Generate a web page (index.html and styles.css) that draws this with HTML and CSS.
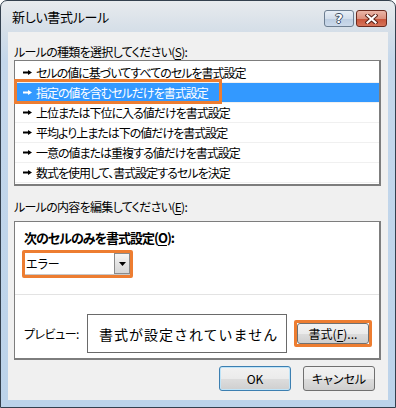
FILE: index.html
```html
<!DOCTYPE html>
<html lang="ja">
<head>
  <meta charset="UTF-8">
  <title>新しい書式ルール</title>
  <link rel="stylesheet" href="styles.css">
</head>
<body>
  <div class="window">
    <div class="titlebar">
      <span class="title">新しい書式ルール</span>
      <div class="caption-buttons">
        <button class="cap cap-help">?</button>
        <button class="cap cap-close">
          <svg width="13" height="10" viewBox="0 0 13 10">
            <path d="M2.5 1.5L10.5 8.5M10.5 1.5L2.5 8.5" stroke="#5b2218" stroke-width="4.2" stroke-linecap="square"/>
            <path d="M2.5 1.5L10.5 8.5M10.5 1.5L2.5 8.5" stroke="#fff" stroke-width="2.2" stroke-linecap="square"/>
          </svg>
        </button>
      </div>
    </div>

    <div class="dialog">
      <div class="label">ルールの種類を選択してください(<u>S</u>):</div>
      <div class="rule-list">
        <div class="rule"><svg class="arrow" viewBox="0 0 9 5"><path d="M0 1.5h5V0l4 2.5-4 2.5V3.5H0z"/></svg>セルの値に基づいてすべてのセルを書式設定</div>
        <div class="rule selected"><svg class="arrow" viewBox="0 0 9 5"><path d="M0 1.5h5V0l4 2.5-4 2.5V3.5H0z"/></svg>指定の値を含むセルだけを書式設定</div>
        <div class="rule"><svg class="arrow" viewBox="0 0 9 5"><path d="M0 1.5h5V0l4 2.5-4 2.5V3.5H0z"/></svg>上位または下位に入る値だけを書式設定</div>
        <div class="rule"><svg class="arrow" viewBox="0 0 9 5"><path d="M0 1.5h5V0l4 2.5-4 2.5V3.5H0z"/></svg>平均より上または下の値だけを書式設定</div>
        <div class="rule"><svg class="arrow" viewBox="0 0 9 5"><path d="M0 1.5h5V0l4 2.5-4 2.5V3.5H0z"/></svg>一意の値または重複する値だけを書式設定</div>
        <div class="rule"><svg class="arrow" viewBox="0 0 9 5"><path d="M0 1.5h5V0l4 2.5-4 2.5V3.5H0z"/></svg>数式を使用して、書式設定するセルを決定</div>
        <div class="highlight"></div>
      </div>

      <div class="label label-edit">ルールの内容を編集してください(<u>E</u>):</div>
      <div class="panel">
        <div class="panel-head">次のセルのみを書式設定(<u>O</u>):</div>
        <div class="combo-frame">
          <div class="combo">
            <span class="combo-value">エラー</span>
            <span class="combo-btn">
              <svg width="7" height="4" viewBox="0 0 7 4"><path d="M0 0h7L3.5 4z"/></svg>
            </span>
          </div>
        </div>
        <div class="separator"></div>
        <div class="preview-row">
          <span class="preview-label">プレビュー:</span>
          <div class="preview-box">書式が設定されていません</div>
          <div class="format-frame">
            <button class="btn btn-format">書式(<u>F</u>)...</button>
          </div>
        </div>
      </div>

      <div class="actions">
        <button class="btn btn-default">OK</button>
        <button class="btn">キャンセル</button>
      </div>
    </div>
  </div>
</body>
</html>
```

FILE: styles.css
```css
body {
  margin: 0;
  background: #fff;
  font-family: "Noto Sans CJK JP", "Liberation Sans", sans-serif;
  color: #000;
}

.window {
  width: 396px;
  height: 408px;
  box-sizing: border-box;
  border: 1px solid #34404e;
  border-radius: 7px 7px 0 0;
  background: linear-gradient(#e8ebee, #d6dfe8 28px, #c4d7eb 60px, #bcd3ea);
  display: flex;
  flex-direction: column;
}

/* title bar */
.titlebar {
  height: 31px;
  flex-shrink: 0;
  display: flex;
  justify-content: space-between;
  align-items: flex-start;
  padding: 0 8px 0 11px;
}

.title {
  font-size: 13px;
  line-height: 31px;
  font-feature-settings: "palt";
  letter-spacing: -0.3px;
}

.caption-buttons {
  display: flex;
  gap: 2px;
  margin-top: 9px;
}

.cap {
  width: 30px;
  height: 17px;
  padding: 0;
  box-sizing: border-box;
  border: 1px solid #6d7e91;
  border-radius: 3px;
  display: flex;
  align-items: center;
  justify-content: center;
}

.cap-help {
  background: linear-gradient(#e8eff7, #d3deeb 50%, #bccde1 51%, #cbd9ea);
  color: #fff;
  font: bold 13px "DejaVu Sans", sans-serif;
  text-shadow: 1px 0 #3d4e62, -1px 0 #3d4e62, 0 1px #3d4e62, 0 -1px #3d4e62;
}

.cap-close {
  width: 31px;
  border-color: #6b2a1e;
  background: linear-gradient(#ebb6a8, #dc917e 50%, #c85339 51%, #d6745a);
}

/* dialog body */
.dialog {
  flex: 1;
  margin: 0 7px 7px;
  padding: 0 7px 9px 6px;
  background: #f0f0f0;
  display: flex;
  flex-direction: column;
  font-size: 12px;
  font-feature-settings: "palt";
}

.label {
  margin-top: 12px;
  line-height: 16px;
  white-space: nowrap;
  letter-spacing: -0.7px;
}

.label-edit {
  margin-top: 13px;
}

u {
  text-underline-offset: 2px;
}

.rule-list {
  position: relative;
  height: 126px;
  box-sizing: border-box;
  padding-top: 2px;
  background: #fff;
  border: 1px solid #7d7d7d;
  border-right-width: 2px;
  border-bottom-width: 2px;
}

.rule {
  height: 19px;
  border-bottom: 1px solid #f0f0f0;
  display: flex;
  align-items: center;
  padding-left: 8px;
  white-space: nowrap;
  letter-spacing: -1px;
}

.rule.selected {
  background: #3399ff;
  color: #fff;
}

.arrow {
  width: 9px;
  height: 5px;
  margin-right: 4px;
  fill: currentColor;
  flex-shrink: 0;
}

.highlight {
  position: absolute;
  left: -1px;
  top: 18px;
  width: 208px;
  height: 25px;
  box-sizing: border-box;
  border: 3px solid #ed7d31;
}

/* rule description panel */
.panel {
  margin-top: 6px;
  height: 139px;
  box-sizing: border-box;
  background: #fff;
  border: 1px solid #7d7d7d;
  border-right-width: 2px;
  border-bottom-width: 2px;
}

.panel-head {
  padding: 7px 0 0 9px;
  font-size: 13px;
  font-weight: bold;
  line-height: 18px;
  letter-spacing: -1px;
}

.combo-frame {
  margin: 3px 0 0 7px;
  width: 111px;
  height: 28px;
  box-sizing: border-box;
  border: 3px solid #ed7d31;
  border-radius: 2px;
  display: flex;
}

.combo {
  flex: 1;
  display: flex;
  align-items: flex-start;
  background: #fff;
  border-bottom: 1px solid #c8c8c8;
}

.combo-value {
  padding-left: 1px;
  line-height: 21px;
}

.combo-btn {
  margin-left: auto;
  width: 16px;
  height: 21px;
  box-sizing: border-box;
  border: 1px solid #8a8a8a;
  background: linear-gradient(#f5f5f5, #e4e4e4 50%, #d6d6d6);
  display: flex;
  align-items: center;
  justify-content: center;
}

.separator {
  height: 1px;
  margin-top: 16px;
  background: #e3e3e3;
}

.preview-row {
  display: flex;
  align-items: center;
  padding: 19px 0 0 9px;
}

.preview-label {
  width: 63px;
  flex-shrink: 0;
  letter-spacing: -0.5px;
}

.preview-box {
  width: 200px;
  height: 39px;
  box-sizing: border-box;
  border: 1px solid #6a6a6a;
  display: flex;
  align-items: center;
  padding-left: 11px;
  font-size: 14px;
  letter-spacing: 1px;
  font-feature-settings: normal;
  white-space: nowrap;
}

.format-frame {
  margin-left: 7px;
  width: 78px;
  height: 27px;
  box-sizing: border-box;
  border: 3px solid #ed7d31;
  border-radius: 2px;
  display: flex;
}

/* buttons */
.btn {
  width: 72px;
  height: 25px;
  padding: 0;
  box-sizing: border-box;
  border: 1px solid #707070;
  border-radius: 3px;
  background: linear-gradient(#f2f2f2, #ebebeb 50%, #dddddd 51%, #cfcfcf);
  font: inherit;
  font-size: 12px;
  color: #000;
}

.btn-format {
  width: 100%;
  height: 100%;
}

.btn-default {
  border-color: #3c7fb1;
  box-shadow: inset 0 0 0 1px #bfe4f8;
}

.actions {
  margin-top: 6px;
  display: flex;
  justify-content: flex-end;
  gap: 12px;
  padding-right: 6px;
}
```
